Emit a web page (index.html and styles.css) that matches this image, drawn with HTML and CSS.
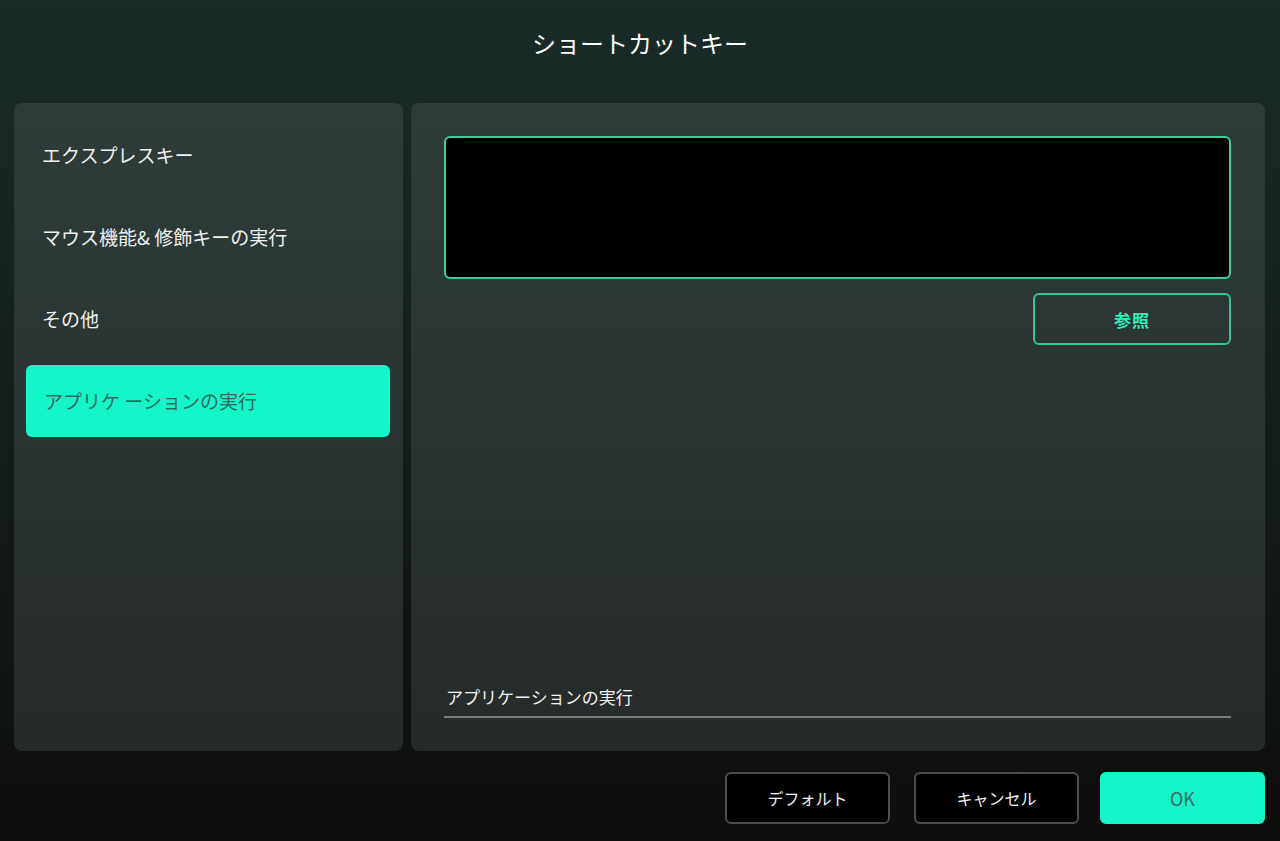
FILE: index.html
```html
<!DOCTYPE html>
<html lang="ja">
<head>
  <meta charset="UTF-8">
  <title>ショートカットキー</title>
  <link rel="stylesheet" href="styles.css">
</head>
<body>

  <div class="dialog">
    <h1 class="title">ショートカットキー</h1>

    <!-- panels -->
    <div class="main">
      <div class="side">
        <div class="item">エクスプレスキー</div>
        <div class="item">マウス機能&amp; 修飾キーの実行</div>
        <div class="item">その他</div>
        <div class="item active">アプリケ ーションの実行</div>
      </div>

      <div class="content">
        <div class="pathbox"></div>
        <div class="row-right">
          <button class="browse">参照</button>
        </div>
        <div class="label">アプリケーションの実行</div>
      </div>
    </div>

    <!-- footer buttons -->
    <div class="footer">
      <button class="btn">デフォルト</button>
      <button class="btn cancel">キャンセル</button>
      <button class="btn ok">OK</button>
    </div>
  </div>

</body>
</html>
```

FILE: styles.css
```css
html, body { margin: 0; padding: 0; }
body {
  width: 1280px; height: 841px; overflow: hidden;
  background: linear-gradient(180deg, #1a2c28 0%, #16211f 40%, #0f1211 85%, #0c0d0d 100%);
  color: #f2f2f2;
  font-family: "Noto Sans CJK JP", "Noto Sans", sans-serif;
}
.dialog { display: flex; flex-direction: column; height: 841px; }
.title {
  margin: 0; height: 103px; box-sizing: border-box; padding-top: 24px;
  text-align: center; font-size: 24px; font-weight: 400; color: #fff; line-height: 38px;
}
.main { display: flex; gap: 8px; padding: 0 15px 0 14px; height: 648px; }

.side, .content {
  border-radius: 8px;
  background: linear-gradient(180deg, #2e3c39 0%, #2a3432 50%, #262a2a 100%);
  box-sizing: border-box;
}
.side { width: 389px; padding: 16px 13px 0 12px; display: flex; flex-direction: column; gap: 10px; }
.item {
  height: 72px; line-height: 72px; padding-left: 16px;
  font-size: 19px; color: #f0f0f0; border-radius: 6px;
}
.item.active { background: #14f5c8; color: #2e6b5d; padding-left: 18px; }

.content { flex: 1; padding: 33px 34px 33px 33px; display: flex; flex-direction: column; }
.pathbox {
  height: 143px; box-sizing: border-box;
  background: #000; border: 2px solid #3ccf9f; border-radius: 6px;
}
.row-right { display: flex; justify-content: flex-end; margin-top: 14px; }
.browse {
  width: 198px; height: 52px; background: transparent;
  border: 2px solid #2fc797; border-radius: 6px;
  color: #2af0bd; font-size: 17px; font-weight: 700; font-family: inherit; letter-spacing: 1px;
}
.label {
  margin-top: auto; padding: 0 2px 6px; font-size: 17px; color: #f2f2f2;
  border-bottom: 2px solid #7c7f7e; line-height: 26px;
}

.footer { display: flex; justify-content: flex-end; gap: 22px; padding: 21px 15px 0 0; }
.btn {
  width: 165px; height: 52px; background: #000; color: #f2f2f2;
  border: 2px solid #4a4e4d; border-radius: 6px;
  font-size: 16px; font-family: inherit;
}
.btn:first-child { margin-right: 2px; }
.btn.cancel { margin-right: -1px; }
.btn.ok { background: #14f5c8; border-color: #14f5c8; color: #3b6d62; font-size: 18px; }
```
